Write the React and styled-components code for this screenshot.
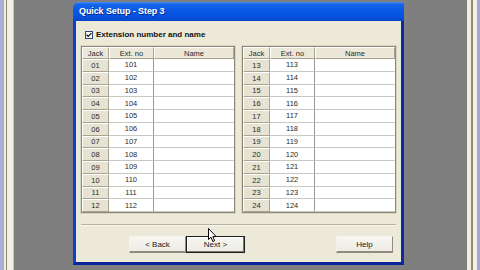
import React from "react";
import styled, { createGlobalStyle } from "styled-components";

const GlobalStyle = createGlobalStyle`
  html, body {
    margin: 0;
    padding: 0;
    background: #808080;
    overflow: hidden;
  }
  * {
    box-sizing: border-box;
  }
`;

const leftTable = Array.from({ length: 12 }, (_, i) => ({
  jack: String(i + 1).padStart(2, "0"),
  ext: String(101 + i),
}));

const rightTable = Array.from({ length: 12 }, (_, i) => ({
  jack: String(i + 13),
  ext: String(113 + i),
}));

const leftStripes = [
  { w: 4, c: "#a9b0d4" },
  { w: 2, c: "#f1ede2" },
  { w: 1, c: "#8f8c72" },
  { w: 6, c: "#f3efe5" },
  { w: 1, c: "#c9c5b8" },
];

const rightStripes = [
  { w: 4, c: "#f2eee3" },
  { w: 2, c: "#8f8c72" },
  { w: 4, c: "#f3efe5" },
  { w: 3, c: "#9ea7d6" },
];

export default function App() {
  return (
    <>
      <GlobalStyle />
      <Screen>
        <Edge>
          {leftStripes.map((s, i) => (
            <Stripe key={i} $w={s.w} $c={s.c} />
          ))}
        </Edge>
        <Desk>
          <Window>
            <TitleBar>Quick Setup - Step 3</TitleBar>
            <Client>
              <CheckRow>
                <CheckBox>
                  <svg width="6" height="6" viewBox="0 0 6 6">
                    <path d="M0.6 2.8 L2.2 4.4 L5.4 1.1" fill="none" stroke="#1a1a1a" strokeWidth="1.3" />
                  </svg>
                </CheckBox>
                <CheckLabel>Extension number and name</CheckLabel>
              </CheckRow>
              <Tables>
                <JackTable rows={leftTable} />
                <JackTable rows={rightTable} />
              </Tables>
              <Separator />
              <ButtonRow>
                <NavGroup>
                  <Button $w={57}>&lt; Back</Button>
                  <Button $w={59} $default>Next &gt;</Button>
                </NavGroup>
                <Button $w={57} style={{ marginLeft: "auto" }}>Help</Button>
              </ButtonRow>
            </Client>
            <Cursor width="10" height="15" viewBox="0 0 10 15">
              <path
                d="M0.5 0.5 L0.5 11.5 L3 9.2 L4.8 13.5 L6.6 12.7 L4.9 8.6 L8.2 8.6 Z"
                fill="#fff"
                stroke="#000"
                strokeWidth="1"
                strokeLinejoin="round"
              />
            </Cursor>
          </Window>
        </Desk>
        <Edge>
          {rightStripes.map((s, i) => (
            <Stripe key={i} $w={s.w} $c={s.c} />
          ))}
        </Edge>
      </Screen>
    </>
  );
}

function JackTable({ rows }) {
  return (
    <Table>
      <HeadCell>Jack</HeadCell>
      <HeadCell>Ext. no</HeadCell>
      <HeadCell>Name</HeadCell>
      {rows.map((r) => (
        <React.Fragment key={r.jack}>
          <JackCell>{r.jack}</JackCell>
          <DataCell>{r.ext}</DataCell>
          <DataCell $name />
        </React.Fragment>
      ))}
    </Table>
  );
}

const Screen = styled.div`
  display: flex;
  width: 480px;
  height: 270px;
  background: #808080;
  font-family: "Liberation Sans", Arial, sans-serif;
`;

const Edge = styled.div`
  display: flex;
  height: 100%;
`;

const Stripe = styled.div`
  width: ${(p) => p.$w}px;
  height: 100%;
  background: ${(p) => p.$c};
`;

const Desk = styled.div`
  flex: 1;
  background: #7f7f7f;
  padding: 2px 0 0 59px;
`;

const Window = styled.div`
  position: relative;
  width: 331px;
  height: 263px;
  display: flex;
  flex-direction: column;
`;

const TitleBar = styled.div`
  height: 19px;
  border-radius: 6px 0 0 0;
  background: linear-gradient(
    #4a90f5 0%,
    #1466ea 12%,
    #0a5ae6 40%,
    #0552df 75%,
    #0446c9 100%
  );
  color: #fff;
  font-weight: bold;
  font-size: 9px;
  letter-spacing: -0.1px;
  line-height: 19px;
  padding-left: 6px;
  text-shadow: 1px 1px 0 #0a2a8a;
`;

const Client = styled.div`
  flex: 1;
  display: flex;
  flex-direction: column;
  background: #ece9d8;
  border: 3px solid #0a3fd6;
  border-top: none;
  border-right-color: #0a2aa8;
  border-bottom-color: #0a249a;
  padding: 10px 5px 0 5px;
`;

const CheckRow = styled.div`
  display: flex;
  align-items: center;
  height: 8px;
  padding-left: 4px;
  gap: 3px;
`;

const CheckBox = styled.div`
  width: 8px;
  height: 8px;
  border: 1px solid #2a4a78;
  background: #f6f6f2;
  display: flex;
  align-items: center;
  justify-content: center;
`;

const CheckLabel = styled.span`
  font-size: 8px;
  font-weight: bold;
  color: #111;
  line-height: 8px;
`;

const Tables = styled.div`
  display: flex;
  gap: 7px;
  margin-top: 7px;
`;

const Table = styled.div`
  width: 154px;
  display: grid;
  grid-template-columns: 27px 45px 1fr;
  grid-template-rows: 12px repeat(12, 12.75px);
  border: 1px solid #8d8a78;
  box-shadow: 0 0 0 1px #d8d4c2;
  background: #fff;
  font-size: 7.5px;
  color: #2a2a2a;
`;

const HeadCell = styled.div`
  display: flex;
  align-items: center;
  justify-content: center;
  background: #ebe8d9;
  border-top: 1px solid #fff;
  border-left: 1px solid #fff;
  border-right: 1px solid #a7a492;
  border-bottom: 1px solid #a7a492;
`;

const JackCell = styled(HeadCell)`
  background: #e6e3d3;
`;

const DataCell = styled.div`
  display: flex;
  align-items: center;
  justify-content: center;
  background: #fff;
  border-bottom: 1px solid #c9c9c4;
  border-right: ${(p) => (p.$name ? "none" : "1px solid #9a9a94")};
`;

const Separator = styled.div`
  margin-top: 11px;
  height: 2px;
  border-top: 1px solid #b5b2a2;
  border-bottom: 1px solid #fbfaf5;
`;

const ButtonRow = styled.div`
  display: flex;
  margin-top: 10px;
  padding: 0 3px 0 48px;
`;

const NavGroup = styled.div`
  display: flex;
`;

const Button = styled.div`
  width: ${(p) => p.$w}px;
  height: 17px;
  display: flex;
  align-items: center;
  justify-content: center;
  font-size: 8px;
  color: #1a1a1a;
  background: linear-gradient(#f7f6f1, #ecebe4);
  border-top: 1px solid #f4f3ee;
  border-left: 1px solid #f4f3ee;
  border-right: 1px solid #8f8c7e;
  border-bottom: 2px solid #8f8c7e;
  ${(p) =>
    p.$default &&
    `
    border: 1px solid #1e1e1e;
    box-shadow: inset -1px -1px 0 #7d7a6c, inset 1px 1px 0 #fff;
  `}
`;

const Cursor = styled.svg`
  position: absolute;
  left: 135px;
  top: 226px;
`;
